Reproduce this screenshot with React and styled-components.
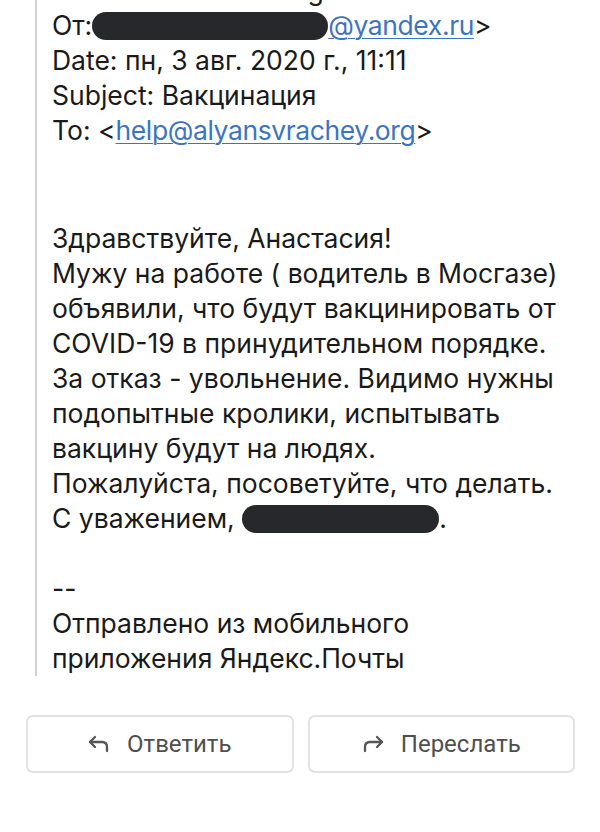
import styled, { createGlobalStyle } from 'styled-components';

const GlobalStyle = createGlobalStyle`
  html, body {
    margin: 0;
    padding: 0;
    background: #fff;
  }
  body {
    font-family: Inter, 'Liberation Sans', Arial, sans-serif;
    color: #1a1a1a;
  }
`;

const Page = styled.div`
  width: 600px;
  height: 832px;
  overflow: hidden;
  display: flex;
  flex-direction: column;
`;

const Quote = styled.div`
  margin-left: 35px;
  border-left: 2px solid #d2d2d2;
  padding-left: 15px;
  height: 676px;
  overflow: hidden;
  font-size: 26.5px;
  line-height: 35px;
`;

const Line = styled.div`
  white-space: nowrap;
`;

const CutLine = styled(Line)`
  margin-top: -27px;
`;

const Gap = styled.div`
  height: ${(p) => p.h}px;
`;

const Mail = styled.a`
  color: #3d74c2;
  letter-spacing: -0.4px;
  text-decoration: underline;
  text-decoration-thickness: 1px;
  text-underline-offset: 3px;
`;

const Blot = styled.span`
  display: inline-block;
  vertical-align: middle;
  width: ${(p) => p.w}px;
  height: ${(p) => p.h}px;
  background: #26282b;
  border-radius: 16px;
  margin-top: -4px;
`;

const Actions = styled.div`
  display: grid;
  grid-template-columns: 1fr 1fr;
  gap: 14px;
  padding: 39px 25px 0 26px;
`;

const Button = styled.button`
  height: 58px;
  border: 2px solid #e2e2e2;
  border-radius: 7px;
  background: #fff;
  display: flex;
  align-items: center;
  justify-content: center;
  gap: 17px;
  font-family: Roboto, 'Liberation Sans', sans-serif;
  font-size: 24px;
  color: #4f4f4f;
  padding: 0;
  cursor: pointer;
`;

const ReplyIcon = () => (
  <svg width="22" height="20" viewBox="0 0 22 20" fill="none" stroke="#555" strokeWidth="2.3" strokeLinecap="round" strokeLinejoin="round">
    <path d="M7 3 L2 8 L7 13" />
    <path d="M2 8 H14 Q19 8 19 13 V17" />
  </svg>
);

const ForwardIcon = () => (
  <svg width="22" height="20" viewBox="0 0 22 20" fill="none" stroke="#555" strokeWidth="2.3" strokeLinecap="round" strokeLinejoin="round">
    <path d="M15 3 L20 8 L15 13" />
    <path d="M20 8 H8 Q3 8 3 13 V17" />
  </svg>
);

export default function App() {
  return (
    <Page>
      <GlobalStyle />
      <Quote>
        <CutLine>-- Forwarded message -----</CutLine>
        <Line>
          От:<Blot w={236} h={28} />
          <Mail href="#">@yandex.ru</Mail>&gt;
        </Line>
        <Line>Date: пн, 3 авг. 2020 г., 11:11</Line>
        <Line>Subject: Вакцинация</Line>
        <Line>
          To: &lt;<Mail href="#">help@alyansvrachey.org</Mail>&gt;
        </Line>
        <Gap h={73} />
        <Line>Здравствуйте, Анастасия!</Line>
        <Line>Мужу на работе ( водитель в Мосгазе)</Line>
        <Line>объявили, что будут вакцинировать от</Line>
        <Line>COVID-19 в принудительном порядке.</Line>
        <Line>За отказ - увольнение. Видимо нужны</Line>
        <Line>подопытные кролики, испытывать</Line>
        <Line>вакцину будут на людях.</Line>
        <Line>Пожалуйста, посоветуйте, что делать.</Line>
        <Line>
          С уважением, <Blot w={197} h={28} />.
        </Line>
        <Gap h={35} />
        <Line>--</Line>
        <Line>Отправлено из мобильного</Line>
        <Line>приложения Яндекс.Почты</Line>
      </Quote>
      <Actions>
        <Button>
          <ReplyIcon />
          Ответить
        </Button>
        <Button>
          <ForwardIcon />
          Переслать
        </Button>
      </Actions>
    </Page>
  );
}
